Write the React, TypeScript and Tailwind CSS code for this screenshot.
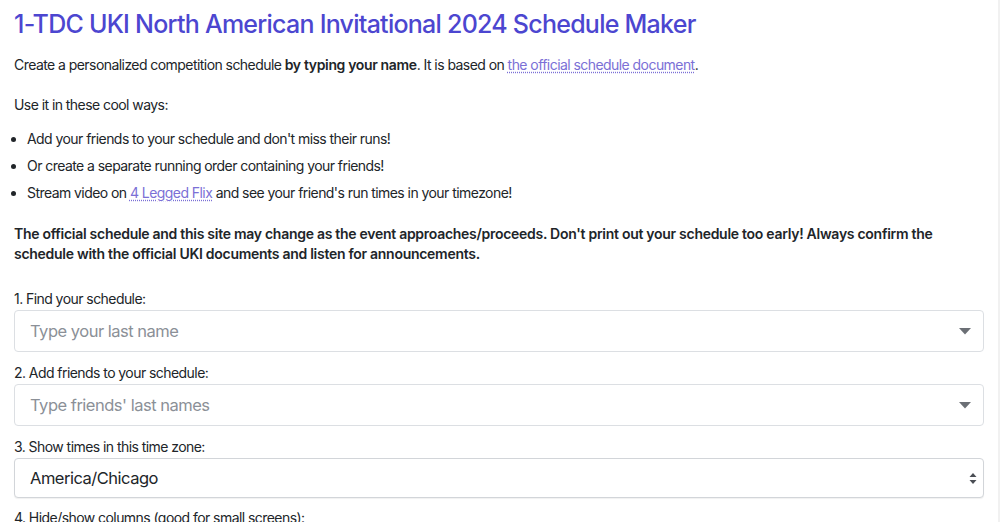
import { useState } from "react";

function Caret() {
  return (
    <svg width="12" height="7" viewBox="0 0 12 7" className="shrink-0">
      <path d="M0 0h12L6 6.5z" fill="#6b6f75" />
    </svg>
  );
}

function UpDown() {
  return (
    <svg width="8" height="13" viewBox="0 0 8 13" className="shrink-0">
      <path d="M4 1L7.5 5h-7z" fill="#4a4e54" />
      <path d="M4 12L0.5 8h7z" fill="#4a4e54" />
    </svg>
  );
}

function Combo({ placeholder }: { placeholder: string }) {
  return (
    <div className="flex h-[42px] items-center justify-between rounded-[4px] border border-[#dcdfe3] bg-white pl-[15px] pr-[12px]">
      <span className="text-[16.5px] tracking-[-0.03em] text-[#8b9097]">{placeholder}</span>
      <Caret />
    </div>
  );
}

export default function App() {
  const [zone] = useState("America/Chicago");
  return (
    <div className="flex min-h-[522px] bg-white font-['Inter',sans-serif] text-[14px] tracking-[-0.04em] text-[#212529]">
      <div className="flex-1 px-[14px] pt-[8px]">
        <h1 className="text-[25px] font-medium leading-[32px] tracking-[-0.03em] text-[#4c46d0]">
          1-TDC UKI North American Invitational 2024 Schedule Maker
        </h1>
        <p className="mt-[15px] leading-[20px]">
          Create a personalized competition schedule{" "}
          <b className="font-semibold tracking-[-0.025em]">by typing your name</b>. It is based on{" "}
          <a href="#" className="text-[#7b70d6] underline decoration-dotted underline-offset-2">
            the official schedule document
          </a>
          .
        </p>
        <p className="mt-[20px] leading-[20px]">Use it in these cool ways:</p>
        <ul className="mt-[14px] list-disc pl-[13px] leading-[20px]">
          <li className="mb-[7px]">Add your friends to your schedule and don't miss their runs!</li>
          <li className="mb-[7px]">Or create a separate running order containing your friends!</li>
          <li>
            Stream video on{" "}
            <a href="#" className="text-[#7b70d6] underline decoration-dotted underline-offset-2">
              4 Legged Flix
            </a>{" "}
            and see your friend's run times in your timezone!
          </li>
        </ul>
        <p className="mt-[21px] font-semibold leading-[20px] tracking-[-0.02em]">
          The official schedule and this site may change as the event approaches/proceeds. Don't print out your schedule too early! Always confirm the schedule with the official UKI documents and listen for announcements.
        </p>
        <div className="mt-[25px] flex flex-col">
          <label className="mb-[1px] leading-[20px]">1. Find your schedule:</label>
          <Combo placeholder="Type your last name" />
          <label className="mb-[1px] mt-[11px] leading-[20px]">2. Add friends to your schedule:</label>
          <Combo placeholder="Type friends' last names" />
          <label className="mb-[1px] mt-[11px] leading-[20px]">3. Show times in this time zone:</label>
          <div className="flex h-[40px] items-center justify-between rounded-[4px] border border-[#d2d5d9] bg-white pl-[15px] pr-[6px] shadow-[0_1px_1px_rgba(0,0,0,0.06)]">
            <span className="text-[16.5px] tracking-[-0.03em] text-[#212529]">{zone}</span>
            <UpDown />
          </div>
          <label className="mt-[10px] leading-[20px]">4. Hide/show columns (good for small screens):</label>
        </div>
      </div>
      <div className="w-[2px] bg-[#f1f1f1]" />
    </div>
  );
}
